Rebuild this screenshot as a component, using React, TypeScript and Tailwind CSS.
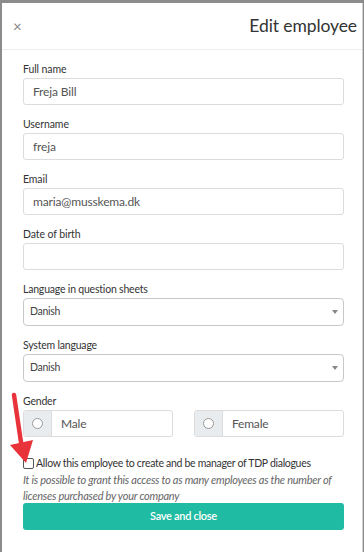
import React from "react";

const font = { fontFamily: "Lato, 'Open Sans', sans-serif" };

function Field({ label, value }: { label: string; value?: string }) {
  return (
    <div className="flex flex-col">
      <div className="text-[10.5px] leading-[13px] text-[#333] mb-[2px] tracking-[-0.1px]">{label}</div>
      <div className="h-[27px] border border-[#dcdcdc] rounded-[3px] flex items-center px-[9px] text-[12px] text-[#555] tracking-[-0.15px]">
        {value}
      </div>
    </div>
  );
}

function SelectField({ label, value }: { label: string; value: string }) {
  return (
    <div className="flex flex-col">
      <div className="text-[10.5px] leading-[13px] text-[#333] mb-[2px] tracking-[-0.2px]">{label}</div>
      <div className="h-[28px] border border-[#c8c8c8] rounded-[4px] flex items-center justify-between pl-[6px] pr-[5px] text-[10.5px] text-[#444] tracking-[-0.3px]">
        <span>{value}</span>
        <svg width="6" height="4" viewBox="0 0 6 4"><path d="M0 0h6L3 4z" fill="#888" /></svg>
      </div>
    </div>
  );
}

function Radio({ label }: { label: string }) {
  return (
    <div className="flex h-[27px] w-[150px] border border-[#dcdcdc] rounded-[3px] overflow-hidden">
      <div className="w-[28px] bg-[#e9ecef] border-r border-[#dcdcdc] flex items-center justify-center">
        <div className="w-[11px] h-[11px] rounded-full bg-white border border-[#999]" />
      </div>
      <div className="flex items-center pl-[9px] text-[12px] text-[#555] tracking-[-0.2px]">{label}</div>
    </div>
  );
}

export default function App() {
  return (
    <div className="w-[364px] h-[552px] bg-[#8c8c8c] pt-[3px] pl-[2px] overflow-hidden" style={font}>
      <div className="relative w-[361px] h-[549px] bg-white border-r border-[#d0d0d0]">
        <div className="h-[47px] flex items-center justify-between pl-[11px] pr-[5px] border-b border-[#eeeeee]">
          <span className="text-[15px] text-[#888] leading-none">×</span>
          <span className="text-[17.5px] text-[#333] tracking-[-0.1px]">Edit employee</span>
        </div>
        <div className="pl-[21px] pr-[18px] pt-[13px] flex flex-col gap-[13px]">
          <Field label="Full name" value="Freja Bill" />
          <Field label="Username" value="freja" />
          <Field label="Email" value="maria@musskema.dk" />
          <Field label="Date of birth" />
          <SelectField label="Language in question sheets" value="Danish" />
          <SelectField label="System language" value="Danish" />
          <div className="flex flex-col">
            <div className="text-[10.5px] leading-[13px] text-[#333] mb-[2px] tracking-[-0.2px]">Gender</div>
            <div className="flex justify-between">
              <Radio label="Male" />
              <Radio label="Female" />
            </div>
          </div>
        </div>
        <div className="pl-[21px] pr-[18px] mt-[19px]">
          <div className="flex items-center text-[10.5px] text-[#333] leading-[14px] tracking-[-0.3px] whitespace-nowrap">
            <span className="w-[11px] h-[11px] border border-[#555] rounded-[2px] mr-[2px] bg-white shrink-0" />
            Allow this employee to create and be manager of TDP dialogues
          </div>
          <div className="italic text-[11px] text-[#666] leading-[16px] mt-[2px] tracking-[-0.25px]">
            It is possible to grant this access to as many employees as the number of licenses purchased by your company
          </div>
          <div className="-mt-[1px] h-[27px] rounded-[3px] bg-[#1fbba2] flex items-center justify-center text-white text-[11px] font-semibold tracking-[-0.3px]">
            Save and close
          </div>
        </div>
        <svg className="absolute left-0 top-[388px]" width="40" height="80" viewBox="0 0 40 80">
          <path d="M12 4 L20 58" stroke="#e8333a" strokeWidth="4.5" strokeLinecap="round" fill="none" />
          <path d="M8 54 L24 72 L31 49 Z" fill="#e8333a" />
        </svg>
      </div>
    </div>
  );
}
